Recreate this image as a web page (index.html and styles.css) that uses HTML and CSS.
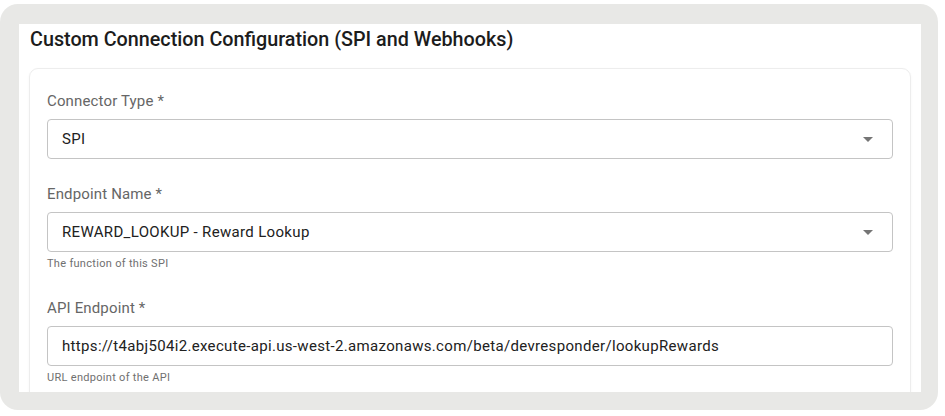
FILE: index.html
```html
<!DOCTYPE html>
<html lang="en">
<head>
    <meta charset="UTF-8">
    <meta name="viewport" content="width=device-width, initial-scale=1.0">
    <title>Custom Connection Configuration</title>
    <link rel="stylesheet" href="styles.css">
</head>
<body>
    <div class="frame">
        <div class="panel">
            <h2 class="panel-title">Custom Connection Configuration (SPI and Webhooks)</h2>

            <div class="card">
                <div class="field">
                    <label class="field-label">Connector Type *</label>
                    <div class="field-box select">
                        <span class="field-value">SPI</span>
                        <span class="arrow"></span>
                    </div>
                </div>

                <div class="field">
                    <label class="field-label">Endpoint Name *</label>
                    <div class="field-box select">
                        <span class="field-value">REWARD_LOOKUP - Reward Lookup</span>
                        <span class="arrow"></span>
                    </div>
                    <p class="helper">The function of this SPI</p>
                </div>

                <div class="field">
                    <label class="field-label">API Endpoint *</label>
                    <div class="field-box">
                        <span class="field-value">https://t4abj504i2.execute-api.us-west-2.amazonaws.com/beta/devresponder/lookupRewards</span>
                    </div>
                    <p class="helper">URL endpoint of the API</p>
                </div>
            </div>
        </div>
    </div>
</body>
</html>
```

FILE: styles.css
```css
body {
    margin: 0;
    background-color: #FFF;
    font-family: Roboto, "Liberation Sans", Arial, sans-serif;
}
.frame {
    width: 938px;
    height: 406px;
    margin-top: 4px;
    padding: 20px 17px 18px 19px;
    box-sizing: border-box;
    background-color: #E8E8E6;
    border-radius: 18px;
}
.panel {
    height: 100%;
    padding: 0 10px;
    background-color: #FFF;
    overflow: hidden;
}
.panel-title {
    margin: 0 0 12px 1px;
    font-size: 19.75px;
    font-weight: 500;
    line-height: 32px;
    color: #1C1C1C;
}
.card {
    padding: 22px 17px 60px;
    border: 1px solid #EDEDED;
    border-radius: 9px;
    box-shadow: 0 1px 3px rgba(0, 0, 0, 0.04);
}
.field {
    margin-bottom: 25px;
}
.field-label {
    display: block;
    margin-bottom: 8px;
    font-size: 15px;
    line-height: 20px;
    letter-spacing: 0.15px;
    color: #666;
}
.field-box {
    display: flex;
    align-items: center;
    justify-content: space-between;
    height: 40px;
    padding: 0 19px 0 14px;
    box-sizing: border-box;
    border: 1px solid #C4C4C4;
    border-radius: 4px;
}
.field-value {
    font-size: 15px;
    line-height: 20px;
    letter-spacing: 0.33px;
    color: #212121;
}
.arrow {
    width: 0;
    height: 0;
    border-left: 5px solid transparent;
    border-right: 5px solid transparent;
    border-top: 5px solid #757575;
}
.helper {
    margin: 3px 0 0;
    font-size: 11px;
    line-height: 18px;
    letter-spacing: 0.3px;
    color: #707070;
}
```
